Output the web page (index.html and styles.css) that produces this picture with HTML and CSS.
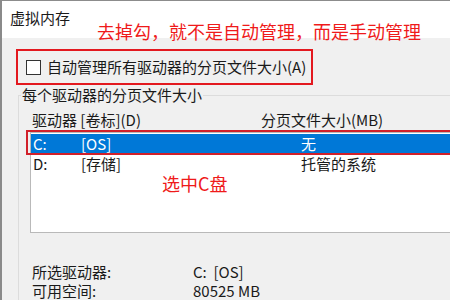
FILE: index.html
```html
<!DOCTYPE html>
<html lang="zh-CN">
<head>
    <meta charset="UTF-8">
    <title>虚拟内存</title>
    <link rel="stylesheet" href="styles.css">
</head>
<body>
    <div class="window">
        <div class="titlebar"><span class="title">虚拟内存</span></div>
        <div class="content">
            <div class="auto-row">
                <span class="checkbox"></span>
                <span>自动管理所有驱动器的分页文件大小(A)</span>
            </div>
            <fieldset class="group">
                <legend>每个驱动器的分页文件大小</legend>
                <div class="group-body">
                    <div class="cols">
                        <span class="col-drive">驱动器 [卷标](D)</span>
                        <span>分页文件大小(MB)</span>
                    </div>
                    <div class="listbox">
                        <div class="row selected">
                            <span class="c1">C:</span><span class="c2">[OS]</span><span>无</span>
                            <div class="mark-row"></div>
                        </div>
                        <div class="row">
                            <span class="c1">D:</span><span class="c2">[存储]</span><span>托管的系统</span>
                        </div>
                    </div>
                    <div class="info">
                        <div class="info-row"><span class="info-label">所选驱动器:</span><span>C:&nbsp;&nbsp;[OS]</span></div>
                        <div class="info-row"><span class="info-label">可用空间:</span><span>80525 MB</span></div>
                    </div>
                </div>
            </fieldset>
        </div>
        <div class="note note-top">去掉勾，就不是自动管理，而是手动管理</div>
        <div class="note note-c">选中C盘</div>
    </div>
</body>
</html>
```

FILE: styles.css
```css
html, body { margin: 0; padding: 0; }
body { width: 450px; height: 300px; overflow: hidden; background: #f0f0f0; font-family: "Noto Sans CJK SC", "Noto Sans", sans-serif; font-size: 15px; color: #1a1a1a; }

.window { position: relative; height: 300px; overflow: hidden; border-top: 1px solid #8c8c8c; border-left: 2px solid #8a8a8a; box-sizing: border-box; }
.titlebar { height: 37px; background: #fff; box-sizing: border-box; padding: 7px 0 0 8px; line-height: 20px; }

.content { background: #f0f0f0; padding: 11px 0 0 14px; }

.auto-row { display: flex; align-items: center; width: 297px; height: 36px; box-sizing: border-box; border: 2px solid #e3191f; padding-left: 8px; gap: 6px; line-height: 20px; white-space: nowrap; }
.checkbox { width: 15px; height: 15px; box-sizing: border-box; border: 1px solid #333; background: #fff; flex: none; }

.group { margin: 0 0 0 2px; padding: 0; border: 1px solid #dcdcdc; border-right: none; min-width: 0; }
.group legend { padding: 0 1px; margin-left: 2px; line-height: 20px; }
.group-body { padding: 5px 0 0 11px; }

.cols { display: flex; line-height: 20px; padding-left: 2px; }
.col-drive { width: 229px; }

.listbox { margin-top: 2px; height: 101px; box-sizing: border-box; padding-top: 1px; border: 1px solid #b9b9b9; border-right: none; background: #fff; }
.row { position: relative; display: flex; height: 20px; line-height: 20px; padding-left: 2px; }
.row .c1 { width: 48px; }
.row .c2 { width: 220px; }
.row.selected { background: #0078d7; color: #fff; }
.mark-row { position: absolute; left: -5px; right: 0; top: -4px; bottom: -1px; border: 2px solid #d1202a; border-right: none; }

.info { margin-top: 29px; padding-left: 2px; }
.info-row { display: flex; line-height: 19px; }
.info-label { width: 161px; }

.note { position: absolute; color: #ef1a1a; font-size: 18px; line-height: 22px; white-space: nowrap; }
.note-top { left: 95px; top: 19px; }
.note-c { left: 160px; top: 171px; }
```
